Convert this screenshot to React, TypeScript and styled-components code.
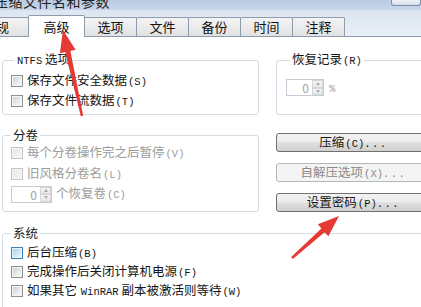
import React from "react";
import styled, { createGlobalStyle } from "styled-components";

const GlobalStyle = createGlobalStyle`
	html, body {
		margin: 0;
		padding: 0;
		background: #fff;
	}
	body {
		font-family: "Noto Sans CJK SC", "Liberation Sans", sans-serif;
		font-size: 12.5px;
		color: #151515;
	}
`;

type BoxState = "normal" | "hover" | "disabled";

const Window = styled.div`
	position: relative;
	width: 421px;
	height: 307px;
	overflow: hidden;
	background: #fff;
`;

const TitleBar = styled.div`
	height: 10px;
	display: flex;
	justify-content: space-between;
	align-items: flex-start;
	overflow: hidden;
	background: linear-gradient(#b9cbe1, #c8d7e9);
`;
const TitleText = styled.div`
	margin: -6px 0 0 -6px;
	font-size: 14px;
	line-height: 14px;
	letter-spacing: 0.5px;
	white-space: nowrap;
	color: #222;
`;
const CaptionButton = styled.div`
	width: 28px;
	height: 5px;
	border: 1px solid #7d91ab;
	border-top: none;
	border-radius: 0 0 3px 3px;
	background: linear-gradient(#eef3f8, #d4dfec);
`;

const TabStrip = styled.div`
	height: 26px;
	display: flex;
	align-items: flex-end;
	background: linear-gradient(#dbe5f1, #e9eff7);
`;
const Tab = styled.div<{ $active?: boolean }>`
	box-sizing: border-box;
	flex: none;
	position: relative;
	z-index: ${(p) => (p.$active ? 2 : 1)};
	width: ${(p) => (p.$active ? 57 : 53)}px;
	height: ${(p) => (p.$active ? 22 : 19)}px;
	margin: 0 -1px ${(p) => (p.$active ? -1 : 0)}px 0;
	display: flex;
	align-items: center;
	justify-content: center;
	border: 1px solid #8d9bab;
	border-bottom: none;
	border-radius: 2px 2px 0 0;
	background: ${(p) => (p.$active ? "#fff" : "linear-gradient(#f4f4f4, #e2e2e2)")};
	font-size: 13px;
	line-height: 14px;
	color: #111;
	&:first-child {
		margin-left: -24px;
	}
`;

const Panel = styled.div`
	box-sizing: border-box;
	width: 470px;
	padding: 15px 0 0 2px;
	border-top: 1px solid #8d9bab;
	background: #fff;
`;

const Columns = styled.div`
	display: grid;
	grid-template-columns: 257px 160px;
	grid-template-rows: 63px 84px;
	column-gap: 17px;
	row-gap: 13px;
`;

const Group = styled.fieldset<{ $pad: string }>`
	box-sizing: border-box;
	min-width: 0;
	margin: 0;
	padding: ${(p) => p.$pad};
	border: 1px solid #d5dde4;
	border-radius: 3px;
`;
const Legend = styled.legend<{ $indent: number }>`
	margin-left: ${(p) => p.$indent}px;
	padding: 0 2px;
	font-size: 12.5px;
	line-height: 14px;
	color: #151515;
`;

const Row = styled.div<{ $h: number }>`
	height: ${(p) => p.$h}px;
	display: flex;
	align-items: center;
	gap: 4px;
	white-space: nowrap;
`;

const Box = styled.span<{ $state: BoxState }>`
	box-sizing: border-box;
	flex: none;
	width: 12px;
	height: 12px;
	border: 1px solid ${(p) => (p.$state === "hover" ? "#3d7fb2" : p.$state === "disabled" ? "#c4c4c4" : "#8e8f8f")};
	box-shadow: inset 0 0 0 1px ${(p) => (p.$state === "hover" ? "#e8f5fd" : "#f6f6f6")};
	background: ${(p) =>
		p.$state === "hover"
			? "linear-gradient(135deg, #9fd0f0, #d9effb 70%, #f0f9ff)"
			: p.$state === "disabled"
			? "linear-gradient(135deg, #e6e6e6, #f7f7f7)"
			: "linear-gradient(135deg, #c8ccd1, #eceef0 65%, #fafafa)"};
`;

const Label = styled.span<{ $disabled?: boolean }>`
	color: ${(p) => (p.$disabled ? "#9b9b9b" : "#151515")};
	line-height: 14px;
`;

const Latin = styled.span`
	font-family: "Liberation Mono", "DejaVu Sans Mono", monospace;
	font-size: 10.5px;
	margin-left: 1px;
`;

const Spin = styled.div<{ $w: number }>`
	box-sizing: border-box;
	flex: none;
	width: ${(p) => p.$w}px;
	height: 17px;
	display: flex;
	border: 1px solid #c8cbcf;
	background: #fff;
`;
const SpinValue = styled.span`
	flex: 1;
	padding-right: 3px;
	text-align: right;
	font-size: 12px;
	line-height: 15px;
	color: #a3a3a3;
`;
const SpinArrows = styled.div`
	width: 11px;
	display: flex;
	flex-direction: column;
`;
const SpinArrow = styled.div`
	box-sizing: border-box;
	flex: 1;
	display: flex;
	align-items: center;
	justify-content: center;
	border: 1px solid #d6d6d6;
	background: linear-gradient(#f6f6f6, #e8e8e8);
`;
const Tri = styled.span<{ $up?: boolean }>`
	width: 0;
	height: 0;
	border-left: 2.5px solid transparent;
	border-right: 2.5px solid transparent;
	${(p) => (p.$up ? "border-bottom" : "border-top")}: 3px solid #acacac;
`;

const Buttons = styled.div`
	padding-top: 5px;
	display: flex;
	flex-direction: column;
	gap: 11px;
`;
const PushButton = styled.button`
	box-sizing: border-box;
	display: block;
	width: 155px;
	height: 19px;
	padding: 0;
	border: 1px solid #707070;
	border-radius: 3px;
	background: linear-gradient(#f3f3f3 0%, #ebebeb 48%, #dedede 52%, #d0d0d0 100%);
	font-family: inherit;
	font-size: 12.5px;
	line-height: 16px;
	color: #151515;
	&:disabled {
		border-color: #b3b7ba;
		background: #f4f4f4;
		color: #8a8a8a;
	}
`;
const Dots = styled.span`
	font-family: "Liberation Mono", monospace;
	font-size: 10.5px;
	letter-spacing: 1.5px;
`;

const SystemGroup = styled(Group)`
	margin-top: 14px;
	width: 460px;
	height: 90px;
`;

const Overlay = styled.svg`
	position: absolute;
	left: 0;
	top: 0;
	z-index: 10;
	pointer-events: none;
`;

const Check = ({ state = "normal", text, mnem, h }: { state?: BoxState; text: React.ReactNode; mnem: string; h: number }) => (
	<Row $h={h}>
		<Box $state={state} />
		<Label $disabled={state === "disabled"}>
			{text}
			<Latin>({mnem})</Latin>
		</Label>
	</Row>
);

const Spinner = ({ w }: { w: number }) => (
	<Spin $w={w}>
		<SpinValue>0</SpinValue>
		<SpinArrows>
			<SpinArrow>
				<Tri $up />
			</SpinArrow>
			<SpinArrow>
				<Tri />
			</SpinArrow>
		</SpinArrows>
	</Spin>
);

const tabs = ["规", "高级", "选项", "文件", "备份", "时间", "注释"];

export default function App() {
	return (
		<>
			<GlobalStyle />
			<Window>
				<TitleBar>
					<TitleText>压缩文件名和参数</TitleText>
					<CaptionButton />
				</TitleBar>
				<TabStrip>
					{tabs.map((t) => (
						<Tab key={t} $active={t === "高级"}>
							{t}
						</Tab>
					))}
				</TabStrip>
				<Panel>
					<Columns>
						<Group $pad="3px 0 0 8px">
							<Legend $indent={3}>
								<Latin>NTFS</Latin> 选项
							</Legend>
							<Check h={20} text="保存文件安全数据" mnem="S" />
							<Check h={20} text="保存文件流数据" mnem="T" />
						</Group>
						<Group $pad="11px 0 0 9px">
							<Legend $indent={4}>
								恢复记录<Latin>(R)</Latin>
							</Legend>
							<Row $h={17}>
								<Spinner w={38} />
								<Label $disabled>
									<Latin>%</Latin>
								</Label>
							</Row>
						</Group>
						<Group $pad="0 0 0 8px">
							<Legend $indent={0}>分卷</Legend>
							<Check h={21} state="disabled" text="每个分卷操作完之后暂停" mnem="V" />
							<Check h={21} state="disabled" text="旧风格分卷名" mnem="L" />
							<Row $h={20}>
								<Spinner w={41} />
								<Label $disabled>
									个恢复卷<Latin>(C)</Latin>
								</Label>
							</Row>
						</Group>
						<Buttons>
							<PushButton>
								压缩<Latin>(C)</Latin>
								<Dots>...</Dots>
							</PushButton>
							<PushButton disabled>
								自解压选项<Latin>(X)</Latin>
								<Dots>...</Dots>
							</PushButton>
							<PushButton>
								设置密码<Latin>(P)</Latin>
								<Dots>...</Dots>
							</PushButton>
						</Buttons>
					</Columns>
					<SystemGroup $pad="3px 0 0 8px">
						<Legend $indent={0}>系统</Legend>
						<Check h={19} state="hover" text="后台压缩" mnem="B" />
						<Check h={19} text="完成操作后关闭计算机电源" mnem="F" />
						<Check
							h={19}
							text={
								<>
									如果其它 <Latin>WinRAR</Latin> 副本被激活则等待
								</>
							}
							mnem="W"
						/>
					</SystemGroup>
				</Panel>
				<Overlay width={421} height={307} viewBox="0 0 421 307">
					<polygon
						fill="#e53a33"
						points="63,30 75.6,49.8 70.4,51 83.2,115.7 80.8,116.3 65.2,52 59.9,53.2"
					/>
					<polygon
						fill="#e53a33"
						points="339,216 328.4,236.3 324.6,232.2 292.8,258.9 291.2,257.1 321.4,228.4 317.8,224.3"
					/>
				</Overlay>
			</Window>
		</>
	);
}
